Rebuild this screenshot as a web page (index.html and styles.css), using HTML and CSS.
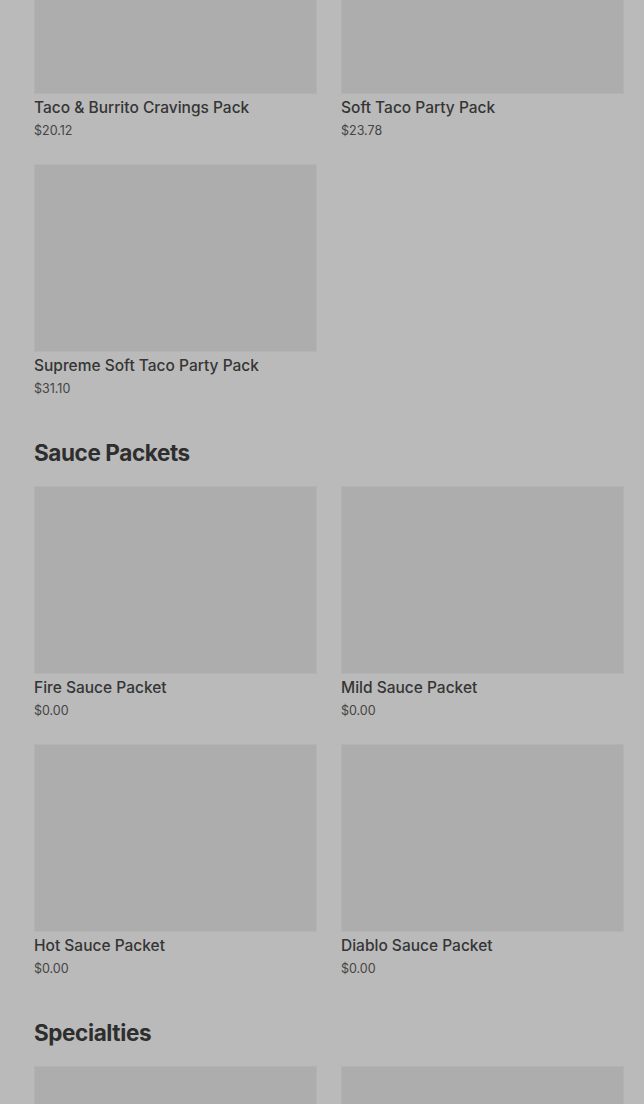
FILE: index.html
```html
<!DOCTYPE html>
<html lang="en">
<head>
  <meta charset="UTF-8" />
  <meta name="viewport" content="width=device-width, initial-scale=1" />
  <title>Menu</title>
  <link rel="stylesheet" href="styles.css">
</head>
<body>
  <main class="menu">
    <section class="section">
      <div class="grid">
        <div class="card">
          <div class="thumb"></div>
          <div class="name">Taco &amp; Burrito Cravings Pack</div>
          <div class="price">$20.12</div>
        </div>
        <div class="card">
          <div class="thumb"></div>
          <div class="name">Soft Taco Party Pack</div>
          <div class="price">$23.78</div>
        </div>
        <div class="card">
          <div class="thumb"></div>
          <div class="name">Supreme Soft Taco Party Pack</div>
          <div class="price">$31.10</div>
        </div>
      </div>
    </section>

    <section class="section">
      <h2>Sauce Packets</h2>
      <div class="grid">
        <div class="card">
          <div class="thumb"></div>
          <div class="name">Fire Sauce Packet</div>
          <div class="price">$0.00</div>
        </div>
        <div class="card">
          <div class="thumb"></div>
          <div class="name">Mild Sauce Packet</div>
          <div class="price">$0.00</div>
        </div>
        <div class="card">
          <div class="thumb"></div>
          <div class="name">Hot Sauce Packet</div>
          <div class="price">$0.00</div>
        </div>
        <div class="card">
          <div class="thumb"></div>
          <div class="name">Diablo Sauce Packet</div>
          <div class="price">$0.00</div>
        </div>
      </div>
    </section>

    <section class="section">
      <h2>Specialties</h2>
      <div class="grid">
        <div class="card">
          <div class="thumb"></div>
        </div>
        <div class="card">
          <div class="thumb"></div>
        </div>
      </div>
    </section>
  </main>
</body>
</html>
```

FILE: styles.css
```css
body {
  margin: 0;
  background: #bababa;
  font-family: Inter, "Liberation Sans", sans-serif;
  color: #333;
  overflow: hidden;
}
.menu {
  margin-top: -94px;
  padding: 0 20px 0 34px;
}
.section {
  margin-bottom: 39px;
}
h2 {
  margin: 0 0 17px;
  font-size: 22.5px;
  line-height: 32px;
  font-weight: 700;
  letter-spacing: -0.4px;
  color: #2e2e2e;
}
.grid {
  display: grid;
  grid-template-columns: 1fr 1fr;
  column-gap: 24px;
  row-gap: 24px;
}
.card {
  height: 234px;
}
.thumb {
  height: 188px;
  background: #adadad;
  border: 1px solid #b3b3b3;
  box-sizing: border-box;
}
.name {
  margin-top: 3px;
  font-size: 15.5px;
  line-height: 21px;
  font-weight: 500;
  color: #353535;
}
.price {
  margin-top: 4px;
  font-size: 12.5px;
  line-height: 18px;
  color: #444;
}
```
